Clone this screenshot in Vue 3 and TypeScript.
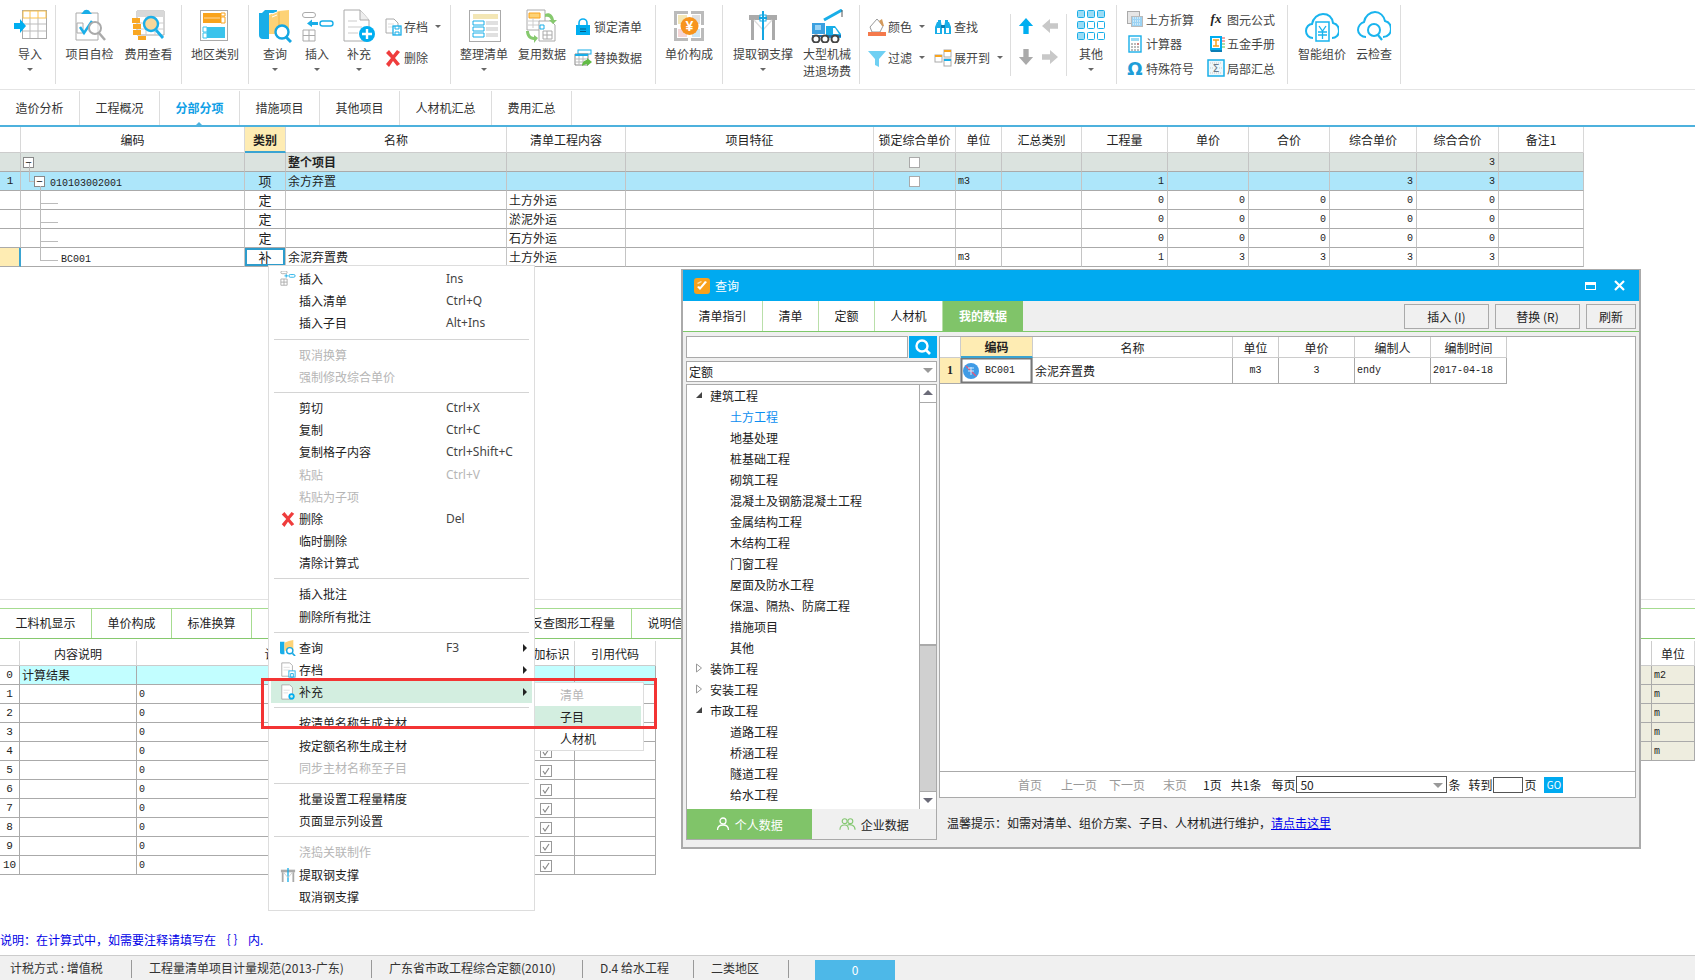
<template>
  <div class="page">
    <!-- ribbon -->
    <div class="ribbon">
      <div v-for="(g, gi) in ribbon" :key="gi" class="rb-group" :style="{ width: g.w + 'px', paddingLeft: (g.pl || 0) + 'px' }">
        <template v-for="(it, i) in g.items" :key="i">
          <div v-if="it.kind === 'big'" class="big" :style="{ width: it.w + 'px' }">
            <svg class="big-ic" viewBox="0 0 34 34" v-html="icons[it.icon]"></svg>
            <span class="big-lb">{{ it.label }}</span>
            <i v-if="it.caret" class="caret big-caret"></i>
          </div>
          <div v-else-if="it.kind === 'sep'" class="rb-sep"></div>
          <div v-else-if="it.kind === 'arrows'" class="arrows" :style="{ width: it.w + 'px' }">
            <svg v-for="a in arrowIcons" :key="a" class="arrow-ic" viewBox="0 0 18 18" v-html="icons[a]"></svg>
          </div>
          <div v-else class="col" :class="{ three: it.rows.length === 3 }" :style="{ width: it.w + 'px', paddingLeft: (it.pl || 0) + 'px' }">
            <div v-for="r in it.rows" :key="r.label" class="col-row">
              <svg class="small-ic" viewBox="0 0 18 18" v-html="icons[r.icon]"></svg>
              <span>{{ r.label }}</span>
              <i v-if="r.caret" class="caret row-caret"></i>
            </div>
          </div>
        </template>
      </div>
    </div>

    <!-- page tabs -->
    <div class="tabs">
      <div v-for="t in pageTabs" :key="t" class="tab" :class="{ active: t === '分部分项' }">{{ t }}</div>
    </div>

    <!-- main grid -->
    <div class="main">
      <table class="grid">
        <colgroup><col v-for="c in mainCols" :key="c.t + c.w" :style="{ width: c.w + 'px' }" /></colgroup>
        <thead>
          <tr>
            <th v-for="c in mainCols" :key="c.t" :class="{ picked: c.t === '类别' }">{{ c.t }}</th>
          </tr>
        </thead>
        <tbody>
          <tr v-for="(r, ri) in mainRows" :key="ri" :class="r.cls">
            <td class="num">{{ r.num }}</td>
            <td class="code">
              <span v-if="ri === 0" class="exp exp0">−</span>
              <template v-if="ri === 1">
                <span class="ln v" style="left: 8px; top: -9px; height: 18px"></span>
                <span class="ln h" style="left: 8px; top: 9px; width: 6px"></span>
                <span class="exp exp1">−</span>
                <span class="ln v" style="left: 19px; top: 14px; height: 5px"></span>
              </template>
              <template v-if="ri > 1">
                <span class="ln v" :style="{ left: '19px', top: '0', height: ri === 5 ? '13px' : '19px' }"></span>
                <span class="ln h" style="left: 19px; top: 12px; width: 18px"></span>
              </template>
              <span class="mono" :class="ri === 5 ? 'pad-l' : 'pad-m'">{{ r.code }}</span>
            </td>
            <td class="kind" :class="{ sel: ri === 5 }">{{ r.kind }}</td>
            <td :class="{ bold: ri === 0 }">{{ r.name }}</td>
            <td>{{ r.content }}</td>
            <td></td>
            <td class="center"><span v-if="ri < 2" class="box"></span></td>
            <td class="mono">{{ r.unit }}</td>
            <td></td>
            <td class="mono to-right">{{ r.qty }}</td>
            <td class="mono to-right">{{ r.price }}</td>
            <td class="mono to-right">{{ r.total }}</td>
            <td class="mono to-right">{{ r.up }}</td>
            <td class="mono to-right">{{ r.tp }}</td>
            <td></td>
          </tr>
        </tbody>
      </table>
    </div>

    <!-- bottom pane -->
    <div class="lower">
      <div class="lower-tabs">
        <div v-for="t in lowerTabs" :key="t.t" class="lower-tab" :style="{ width: t.w + 'px' }">{{ t.t }}</div>
      </div>
      <div class="lower-body">
        <table class="grid sub">
          <colgroup><col v-for="c in subCols" :key="c.t" :style="{ width: c.w + 'px' }" /></colgroup>
          <thead><tr><th v-for="c in subCols" :key="c.t">{{ c.t }}</th></tr></thead>
          <tbody>
            <tr v-for="n in 11" :key="n" :class="{ cyan: n === 1 }">
              <td class="num">{{ n - 1 }}</td>
              <td>{{ n === 1 ? '计算结果' : '' }}</td>
              <td class="mono">{{ n === 1 ? '' : '0' }}</td>
              <td></td>
              <td class="center">
                <svg v-if="n > 1" class="chk" viewBox="0 0 12 12"><rect x="0.5" y="0.5" width="11" height="11" fill="#fff" stroke="#999" /><path d="M3 6l2 3 4-6" fill="none" stroke="#888" stroke-width="1.2" /></svg>
              </td>
              <td></td>
            </tr>
          </tbody>
        </table>
        <table class="grid side">
          <colgroup><col style="width: 11px" /><col style="width: 43px" /></colgroup>
          <thead><tr><th></th><th>单位</th></tr></thead>
          <tbody>
            <tr v-for="(u, i) in sideUnits" :key="i" class="beige"><td></td><td class="mono">{{ u }}</td></tr>
          </tbody>
        </table>
      </div>
    </div>

    <div class="note">说明：在计算式中，如需要注释请填写在 ｛ ｝ 内.</div>

    <div class="status">
      <div v-for="s in statusItems" :key="s.t" class="st-item" :style="{ width: s.w + 'px' }">{{ s.t }}</div>
      <div class="st-box">0</div>
    </div>

    <!-- context menu -->
    <div class="menu">
      <template v-for="(grp, gi) in menuGroups" :key="gi">
        <div v-if="gi > 0" class="menu-sep"></div>
        <div v-for="m in grp" :key="m.t" class="menu-item" :class="{ off: m.off, hot: m.t === '补充' }">
          <svg v-if="m.icon" class="menu-ic" viewBox="0 0 18 18" v-html="icons[m.icon]"></svg>
          <span class="menu-lb">{{ m.t }}</span>
          <span class="menu-key">{{ m.key }}</span>
          <i v-if="m.more" class="more"></i>
        </div>
      </template>
    </div>
    <div class="submenu">
      <div class="sub-item off">清单</div>
      <div class="sub-item hot">子目</div>
      <div class="sub-item">人材机</div>
    </div>
    <div class="redbox"></div>

    <!-- query dialog -->
    <div class="dialog">
      <div class="dlg-title">
        <svg class="dlg-logo" viewBox="0 0 16 16">
          <rect width="16" height="16" rx="3" fill="#f9a11b" />
          <path d="M3 9l3 3 7-8-2-1-5 6-1-1z" fill="#fff" />
          <path d="M3 5l4-2 1 1-4 2z" fill="#ffe3ad" />
        </svg>
        <span>查询</span>
        <span class="dlg-max"></span>
        <svg class="dlg-close" viewBox="0 0 11 11"><path d="M1 1l9 9M10 1l-9 9" stroke="#fff" stroke-width="2.2" /></svg>
      </div>
      <div class="dlg-tabs">
        <div v-for="t in dlgTabs" :key="t.t" class="dlg-tab" :class="{ on: t.t === '我的数据' }" :style="{ width: t.w + 'px' }">{{ t.t }}</div>
        <div class="dlg-btns">
          <button class="btn wide">插入 (I)</button>
          <button class="btn wide">替换 (R)</button>
          <button class="btn narrow">刷新</button>
        </div>
      </div>
      <div class="dlg-body">
        <div class="dlg-left">
          <div class="search">
            <div class="search-in"></div>
            <div class="search-btn">
              <svg viewBox="0 0 18 18" width="18" height="18"><circle cx="8" cy="8" r="5.5" fill="none" stroke="#fff" stroke-width="2.4" /><path d="M12 12l4 4" stroke="#fff" stroke-width="2.6" /></svg>
            </div>
          </div>
          <div class="select"><span>定额</span><i class="sel-tri"></i></div>
          <div class="tree-box">
            <div class="tree-wrap">
              <div class="tree">
                <div v-for="n in treeNodes" :key="n.t" class="node" :class="{ deep: !n.top, cur: n.t === '土方工程' }">
                  <svg v-if="n.top" class="tw" viewBox="0 0 8 10">
                    <path v-if="n.open" d="M7 2v6H1z" fill="#444" />
                    <path v-else d="M1.500 1l5 4-5 4z" fill="#fff" stroke="#999" />
                  </svg>
                  {{ n.t }}
                </div>
              </div>
              <div class="scroll">
                <div class="sb-btn"><i class="sb-up"></i></div>
                <div class="sb-thumb"></div>
                <div class="sb-track"></div>
                <div class="sb-btn"><i class="sb-down"></i></div>
              </div>
            </div>
            <div class="tree-tabs">
              <div class="tree-tab on">
                <svg viewBox="0 0 14 14" width="14" height="14"><circle cx="7" cy="4" r="3" fill="none" stroke="#fff" stroke-width="1.3" /><path d="M1.5 13c0-3.5 2-5 5.500-5s5.500 1.500 5.500 5" fill="none" stroke="#fff" stroke-width="1.3" /></svg>
                个人数据
              </div>
              <div class="tree-tab">
                <svg viewBox="0 0 18 14" width="17" height="14"><circle cx="6" cy="4" r="2.600" fill="none" stroke="#85c872" stroke-width="1.200" /><circle cx="12" cy="4" r="2.600" fill="none" stroke="#85c872" stroke-width="1.200" /><path d="M1 13c0-3 2-5 5-5s4 2 4 5M9 8c3-1 8 0 8 5" fill="none" stroke="#85c872" stroke-width="1.200" /></svg>
                企业数据
              </div>
            </div>
          </div>
        </div>
        <div class="dlg-right">
          <div class="right-pane">
            <div class="res-wrap">
              <table class="res">
                <colgroup><col v-for="c in resCols" :key="c.t" :style="{ width: c.w + 'px' }" /></colgroup>
                <thead>
                  <tr><th v-for="c in resCols" :key="c.t" :class="{ picked2: c.t === '编码' }">{{ c.t }}</th></tr>
                </thead>
                <tbody>
                  <tr>
                    <td class="res-num">1</td>
                    <td class="res-code">
                      <svg viewBox="0 0 16 16" width="16" height="16"><circle cx="8" cy="8" r="8" fill="#3f9be6" /><path d="M3 3l10 10" stroke="#e9577a" stroke-width="1.200" /><path d="M5 5h6M5 8h6M8 4v8" stroke="#cfe8ff" stroke-width="1" /></svg>
                      <span class="mono">BC001</span>
                    </td>
                    <td>余泥弃置费</td>
                    <td class="center mono">m3</td>
                    <td class="center mono">3</td>
                    <td class="mono">endy</td>
                    <td class="mono">2017-04-18</td>
                  </tr>
                </tbody>
              </table>
            </div>
            <div class="pager">
              <span class="dim p-first">首页</span>
              <span class="dim p-prev">上一页</span>
              <span class="dim p-next">下一页</span>
              <span class="dim p-last">末页</span>
              <span class="p-pg">1页</span>
              <span class="p-tot">共1条</span>
              <span class="p-per">每页</span>
              <div class="p-sel"><span>50</span><i class="sel-tri"></i></div>
              <span class="p-unit">条</span>
              <span class="p-go">转到</span>
              <div class="p-in"></div>
              <span class="p-ye">页</span>
              <div class="go">GO</div>
            </div>
          </div>
          <div class="hint">温馨提示：如需对清单、组价方案、子目、人材机进行维护，<a class="link">请点击这里</a></div>
        </div>
      </div>
    </div>
  </div>
</template>

<script setup lang="ts">
type Row = { icon: string; label: string; caret?: boolean }
type Item =
  | { kind: 'big'; w: number; icon: string; label: string; caret?: boolean }
  | { kind: 'col'; w: number; pl?: number; rows: Row[] }
  | { kind: 'sep' }
  | { kind: 'arrows'; w: number }

const ribbon: { w: number; pl?: number; items: Item[] }[] = [
  { w: 56, pl: 5, items: [{ kind: 'big', w: 50, icon: 'imp', label: '导入', caret: true }] },
  {
    w: 126,
    pl: 4,
    items: [
      { kind: 'big', w: 59, icon: 'check', label: '项目自检' },
      { kind: 'big', w: 59, icon: 'fee', label: '费用查看' },
    ],
  },
  { w: 67, items: [{ kind: 'big', w: 66, icon: 'area', label: '地区类别' }] },
  {
    w: 202,
    pl: 5,
    items: [
      { kind: 'big', w: 42, icon: 'query', label: '查询', caret: true },
      { kind: 'big', w: 42, icon: 'insert', label: '插入', caret: true },
      { kind: 'big', w: 42, icon: 'add', label: '补充', caret: true },
      {
        kind: 'col',
        w: 70,
        pl: 4,
        rows: [
          { icon: 'save', label: '存档', caret: true },
          { icon: 'del', label: '删除' },
        ],
      },
    ],
  },
  {
    w: 205,
    pl: 4,
    items: [
      { kind: 'big', w: 58, icon: 'tidy', label: '整理清单', caret: true },
      { kind: 'big', w: 58, icon: 'reuse', label: '复用数据' },
      {
        kind: 'col',
        w: 84,
        pl: 3,
        rows: [
          { icon: 'lock', label: '锁定清单' },
          { icon: 'swap', label: '替换数据' },
        ],
      },
    ],
  },
  { w: 67, items: [{ kind: 'big', w: 66, icon: 'unit', label: '单价构成' }] },
  {
    w: 137,
    pl: 6,
    items: [
      { kind: 'big', w: 68, icon: 'steel', label: '提取钢支撑', caret: true },
      { kind: 'big', w: 60, icon: 'crane', label: '大型机械 进退场费' },
    ],
  },
  {
    w: 257,
    pl: 8,
    items: [
      {
        kind: 'col',
        w: 66,
        rows: [
          { icon: 'color', label: '颜色', caret: true },
          { icon: 'filter', label: '过滤', caret: true },
        ],
      },
      {
        kind: 'col',
        w: 76,
        rows: [
          { icon: 'find', label: '查找' },
          { icon: 'expand', label: '展开到', caret: true },
        ],
      },
      { kind: 'sep' },
      { kind: 'arrows', w: 54 },
      { kind: 'sep' },
      { kind: 'big', w: 46, icon: 'other', label: '其他', caret: true },
    ],
  },
  {
    w: 171,
    pl: 9,
    items: [
      {
        kind: 'col',
        w: 81,
        rows: [
          { icon: 'soil', label: '土方折算' },
          { icon: 'calc', label: '计算器' },
          { icon: 'omega', label: '特殊符号' },
        ],
      },
      {
        kind: 'col',
        w: 78,
        rows: [
          { icon: 'fx', label: '图元公式' },
          { icon: 'manual', label: '五金手册' },
          { icon: 'sum', label: '局部汇总' },
        ],
      },
    ],
  },
  {
    w: 113,
    pl: 4,
    items: [
      { kind: 'big', w: 60, icon: 'cloud1', label: '智能组价' },
      { kind: 'big', w: 44, icon: 'cloud2', label: '云检查' },
    ],
  },
]

const arrowIcons = ['up', 'left', 'down', 'right']

const icons: Record<string, string> = {
  imp: `<rect x="9.500" y="1.500" width="24" height="28" fill="#fff" stroke="#aaa"/><path d="M10 2h23v7H10z" fill="#fff" stroke="#fcc24a"/><path d="M17 2v7M25 2v7" stroke="#fcc24a"/><path d="M10 15h23M10 22h23M17 9v20M25 9v20" stroke="#bbb"/><path d="M1 14h6v-4l6 7-6 7v-4H1z" fill="#00aef0"/>`,
  check: `<path d="M3 4h22v27H3z" fill="#fff" stroke="#aaa"/><path d="M10 3c1-3 6-3 7 0l2 2H8z" fill="#19aee8"/><path d="M4 14h6v10H4z" fill="none" stroke="#aaa"/><path d="M7 18l4 6 8-12" fill="none" stroke="#19aee8" stroke-width="2.500"/><circle cx="22" cy="19" r="6" fill="#fff" fill-opacity=".5" stroke="#aaa" stroke-width="2"/><path d="M26 24l6 7" stroke="#aaa" stroke-width="2.500"/>`,
  fee: `<path d="M5 2h27v24H5z" fill="#fff" stroke="#aaa"/><path d="M5 2h27v6H5z" fill="#d8d8d8"/><path d="M5 14h27M5 20h27M14 8v18M23 8v18" stroke="#ccc"/><path d="M0 9h8v5H0zM1 15h8v5H1zM1 21h8v5H1zM6 27h8v4H6z" fill="#f9a723"/><circle cx="19" cy="15" r="7" fill="#f7d79a" stroke="#19aee8" stroke-width="2.400"/><path d="M24 21l7 8" stroke="#19aee8" stroke-width="2.800"/>`,
  area: `<rect x="2.500" y="1.500" width="27" height="30" fill="#fff" stroke="#aaa"/><path d="M5 4h18v10H5z" fill="#f9a31c"/><path d="M23 4h4v3h-4zM23 8h4v6h-4z" fill="none" stroke="#f9a31c"/><path d="M9 18h18v11H9z" fill="#3bc3ec"/><path d="M5 18h4v5H5zM5 24h4v5H5z" fill="none" stroke="#3bc3ec"/><path d="M6 9h16" stroke="#fff" stroke-opacity=".6"/>`,
  query: `<path d="M1 4h10v26H5c-3 0-4-2-4-4z" fill="#19aee8"/><path d="M4 4l3-3h12v3z" fill="#19aee8"/><path d="M11 6l10-4 10-1v24H11z" fill="#fdd276"/><path d="M21 3v22" stroke="#f0b447"/><path d="M14 5l5-2M14 8l5-2" stroke="#fff"/><circle cx="24" cy="23" r="6.500" fill="#fff" stroke="#14a6e2" stroke-width="2.400"/><path d="M28 28l5 5" stroke="#14a6e2" stroke-width="3"/>`,
  insert: `<rect x="2.500" y="3.500" width="13" height="5" rx="2.500" fill="#fff" stroke="#aaa"/><rect x="20" y="12" width="13" height="5" rx="2.500" fill="#fff" stroke="#19aee8" stroke-width="1.400"/><path d="M7 14.500l5-4v2.500h6v3h-6V18z" fill="#19aee8"/><path d="M3 21h12v11H3zM3 26.500h12M9 21v11" fill="none" stroke="#aaa"/>`,
  add: `<path d="M2 1h16l9 10v21H2z" fill="#fff" stroke="#aaa"/><path d="M18 1v10h9" fill="#eee" stroke="#aaa"/><path d="M6 12h9M6 18h14M6 24h10" stroke="#ddd" stroke-width="1.500"/><circle cx="25" cy="25" r="8" fill="#00aef0"/><path d="M25 20v10M20 25h10" stroke="#fff" stroke-width="2.400"/>`,
  save: `<path d="M2 1h8l4 4v10H2z" fill="#fff" stroke="#aaa"/><path d="M4 6h6M4 9h6" stroke="#ddd"/><rect x="9" y="8" width="8" height="9" fill="#fff" stroke="#19aee8" stroke-width="1.300"/><path d="M11 8v3h4V8M11 17v-3h4v3" fill="none" stroke="#19aee8"/>`,
  del: `<path d="M2 4l3-3 4 5 4-5 3 2-5 6 5 6-3 2-4-5-4 6-3-3 5-6z" fill="#ef3c3c"/>`,
  tidy: `<rect x="2.500" y="1.500" width="31" height="31" fill="#fff" stroke="#aaa"/><path d="M6 5h25v5H6z" fill="#f3e6b5"/><path d="M6 12h11v4H6zM6 18h11v4H6zM6 24h11v4H6z" fill="#fff" stroke="#19aee8"/><path d="M19 12h12v4H19zM19 18h12v4H19zM19 24h12v4H19z" fill="#e0e0e0"/>`,
  reuse: `<path d="M2 1h18v20H2z" fill="#fff" stroke="#aaa"/><path d="M4 4h11v5H4z" fill="#fdd276" stroke="#f9a31c"/><path d="M3 12h12M3 16h12M8 9v10" stroke="#ccc"/><path d="M14 12h12l4 4v16H14z" fill="#fff" stroke="#aaa"/><path d="M15 16h4v4h-4z" fill="none" stroke="#19aee8"/><path d="M18 22h9v8h-9zM22 22v8M18 26h9" fill="none" stroke="#aaa"/><path d="M20 5c4-2 8 0 9 6h3l-4 4-4-4h2c-1-3-3-4-6-3z" fill="#86c96e"/><path d="M1 22c0 5 3 9 8 9v3l4-5-4-3v2c-3 0-5-3-5-6z" fill="#86c96e"/>`,
  lock: `<path d="M5 8V5a4 4 0 018 0v3" fill="none" stroke="#0aaef0" stroke-width="1.600"/><rect x="2" y="7" width="14" height="10" fill="#00aef0"/><path d="M6 11h6M6 13.500h6" stroke="#055e8a"/>`,
  swap: `<rect x="4" y="1" width="13" height="4" fill="#fff" stroke="#19aee8"/><path d="M1 5h13v11H1z" fill="#fff" stroke="#888"/><path d="M1 5h13v2H1z" fill="#19aee8"/><path d="M1 10h13M1 13h13M5 7v9M9 7v9" stroke="#bbb"/><path d="M8 17c0-4 3-6 5-6V9l5 4-5 4v-2c-2 0-3 1-5 2z" fill="#62bb46"/>`,
  unit: `<rect x="2.500" y="2.500" width="30" height="30" fill="#fff" stroke="none"/><path d="M2 2h14v3H5v11H2zM32 2H19v3h10v11h3zM2 32h14v-3H5V19H2zM32 32H19v-3h10V19h3z" fill="#bbb"/><path d="M6 6h9v9H6z" fill="#f3e6b5"/><path d="M20 6h8v9h-8z" fill="#e0e0e0"/><path d="M6 20h9v8H6z" fill="#f5d5d5"/><path d="M20 20h8v8h-8z" fill="#cfe6f3"/><circle cx="17.500" cy="17" r="9" fill="#f7941d"/><text x="17.500" y="22" text-anchor="middle" font-size="14" font-weight="700" fill="#fff" font-family="Liberation Sans, sans-serif">¥</text>`,
  steel: `<path d="M3 6h28v5H3z" fill="#aaa"/><path d="M5 11h3v20H5zM26 11h3v20h-3z" fill="#aaa"/><path d="M8 11l9 10 9-10" fill="none" stroke="#ddd" stroke-width="1.300"/><rect x="14" y="6" width="6" height="6" fill="#fff" stroke="#19aee8"/><path d="M17 2v29M13 9h8" stroke="#14a6e2" stroke-width="2"/>`,
  crane: `<path d="M2 14h13v11H2z" fill="#3ba0e0"/><path d="M5 16h6v5H5z" fill="#9bd3f4"/><path d="M14 11L32 1" stroke="#19aee8" stroke-width="3"/><path d="M32 1v7" stroke="#555"/><path d="M16 17h9l6 8v4H16z" fill="#19aee8"/><path d="M23 19h2l4 6h-6z" fill="#fff"/><path d="M2 26h29v2H2z" fill="#1a6fb0"/><circle cx="6" cy="30" r="3.500" fill="#fff" stroke="#444" stroke-width="2"/><circle cx="15" cy="30" r="3.500" fill="#fff" stroke="#444" stroke-width="2"/><circle cx="25" cy="30" r="3.500" fill="#fff" stroke="#444" stroke-width="2"/>`,
  color: `<path d="M9 1l6 7-3 6H4L2 9z" fill="#fff" stroke="#999"/><path d="M11 3l3-2 2 7h-2z" fill="#d49a5c"/><rect x="0" y="14" width="18" height="4" fill="#f4794b"/>`,
  filter: `<path d="M0 2h18l-7 8v8l-4-2v-6z" fill="#6fd0f3"/>`,
  find: `<path d="M1 9l2-5h4l1 5v7H1zM17 9l-2-5h-4l-1 5v7h7z" fill="#19aee8"/><path d="M4 2h3v3H4zM11 2h3v3h-3z" fill="#19aee8"/><path d="M3 10h3v5H3zM12 10h3v5h-3z" fill="#fff"/><path d="M7 7h4v3H7z" fill="#0b7fb5"/>`,
  expand: `<rect x="1" y="6" width="7" height="7" fill="#fff" stroke="#aaa"/><path d="M1 6h7v2H1z" fill="#f9a31c"/><rect x="10" y="1" width="7" height="7" fill="#fff" stroke="#aaa"/><path d="M10 1h7v2h-7z" fill="#f9a31c"/><rect x="10" y="10" width="7" height="7" fill="#fff" stroke="#aaa"/><path d="M10 10h7v2h-7z" fill="#19aee8"/>`,
  up: `<path d="M9 0l8 9h-5v9H6V9H1z" fill="#00aef0"/>`,
  left: `<path d="M0 9l9-8v5h9v6H9v5z" fill="#c8c8c8"/>`,
  down: `<path d="M9 18L1 9h5V0h6v9h5z" fill="#aaa"/>`,
  right: `<path d="M18 9L9 1v5H0v6h9v5z" fill="#c8c8c8"/>`,
  other: `<g fill="#9bdcf5" stroke="#19aee8"><rect x="3.500" y="1.500" width="7" height="7" rx="1"/><rect x="13.500" y="1.500" width="7" height="7" rx="1"/><rect x="23.500" y="1.500" width="7" height="7" rx="1"/><rect x="3.500" y="12.500" width="7" height="7" rx="1"/><rect x="13.500" y="12.500" width="7" height="7" rx="1" fill="#fff"/><rect x="23.500" y="12.500" width="7" height="7" rx="1" fill="#fff"/><rect x="3.500" y="23.500" width="7" height="7" rx="1"/><rect x="13.500" y="23.500" width="7" height="7" rx="1" fill="#fff"/><rect x="23.500" y="23.500" width="7" height="7" rx="1" fill="#fff"/></g>`,
  soil: `<rect x="1.500" y="1.500" width="12" height="12" fill="#e6e6e6" stroke="#aaa"/><rect x="5.500" y="6.500" width="11" height="10" fill="#9bd3f4" stroke="#bbb"/><path d="M7 8h8M7 11h8M7 14h8" stroke="#fff" stroke-dasharray="1 1"/>`,
  calc: `<rect x="3" y="1" width="12" height="16" fill="#fff" stroke="#19aee8" stroke-width="1.400"/><path d="M5 3h8v3H5z" fill="#9bdcf5"/><path d="M5 9h2M8 9h2M11 9h2M5 12h2M8 12h2M11 12h2M5 15h2M8 15h2M11 15h2" stroke="#777"/><path d="M11 9h2" stroke="#e04a4a"/>`,
  omega: `<text x="9" y="16" text-anchor="middle" font-size="18" font-weight="700" fill="#1f9ed8" font-family="DejaVu Sans, sans-serif">Ω</text>`,
  fx: `<text x="9" y="13" text-anchor="middle" font-size="13" font-weight="700" font-style="italic" fill="#222" font-family="Liberation Serif, serif">fx</text>`,
  manual: `<path d="M3 1h12v14H3z" fill="#00aef0"/><path d="M3 15h12v2H4z" fill="#0a7db5"/><path d="M5 3h8v10H5z" fill="#fff"/><path d="M6 5h6M9 5v6M6 11h6" stroke="#f9a31c" stroke-width="1.500"/><path d="M15 3h3M15 6h3" stroke="#e04a4a"/><path d="M15 9h3M15 12h3" stroke="#62bb46"/>`,
  sum: `<rect x="1" y="1" width="16" height="16" fill="#eef8fc" stroke="#19aee8" stroke-width="1.500"/><path d="M3 4h12M3 14h12M3 9h3M12 9h3" stroke="#c8c8c8" stroke-dasharray="1 1"/><text x="9" y="13" text-anchor="middle" font-size="11" fill="#6b7a8a" font-family="DejaVu Sans, sans-serif">Σ</text>`,
  cloud1: `<path d="M8 29c-4 0-7-3-7-7 0-4 3-7 6-7 1-6 6-10 11-10 5 0 9 3 10 9 4 1 6 4 6 8 0 4-3 7-7 7" fill="none" stroke="#19b4ee" stroke-width="2"/><path d="M11 13h13v19H11z" fill="#fff" stroke="#19b4ee" stroke-width="1.500"/><path d="M14 17l3.500 5 3.500-5M13 23h9M13 26h9M17.500 22v8" fill="none" stroke="#19b4ee" stroke-width="1.300"/>`,
  cloud2: `<path d="M9 28c-4 0-8-3-8-7 0-4 3-7 6-8 1-6 6-10 11-10s9 4 10 9c4 1 6 4 6 8 0 4-3 8-8 8" fill="none" stroke="#19b4ee" stroke-width="2"/><circle cx="17" cy="21" r="6" fill="#fff" stroke="#19b4ee" stroke-width="2"/><path d="M21 26l4 5" stroke="#19b4ee" stroke-width="2.200"/>`,
  mInsert: `<rect x="1" y="0" width="7" height="3" rx="1.500" fill="#fff" stroke="#aaa"/><rect x="10" y="4" width="7" height="3" rx="1.500" fill="#fff" stroke="#19aee8"/><path d="M5 5.500h4M7 3.500v4" stroke="#19aee8"/><path d="M1 9h7v7H1zM1 12.500h7M4.500 9v7" fill="none" stroke="#aaa"/>`,
  mQuery: `<path d="M0 2h5v14H2c-1 0-2-1-2-2z" fill="#19aee8"/><path d="M5 3l5-2 5-1v12H5z" fill="#fdd276"/><circle cx="11" cy="12" r="3.500" fill="#fff" stroke="#14a6e2" stroke-width="1.500"/><path d="M14 15l3 3" stroke="#14a6e2" stroke-width="1.800"/>`,
  mSave: `<path d="M2 1h9l3 3v12H2z" fill="#fff" stroke="#aaa"/><path d="M4 6h7M4 9h7" stroke="#ddd"/><rect x="10" y="10" width="7" height="7" fill="#fff" stroke="#19aee8"/><path d="M12 13h3v4h-3z" fill="none" stroke="#19aee8"/>`,
  mAdd: `<path d="M2 1h9l3 3v13H2z" fill="#fff" stroke="#aaa"/><path d="M4 7h7M4 10h5" stroke="#ddd"/><circle cx="13" cy="14" r="3.500" fill="#00aef0"/><circle cx="13" cy="14" r="1.500" fill="#d3eee0"/>`,
  mSteel: `<path d="M1 3h16v3H1z" fill="#aaa"/><path d="M2 6h2v11H2zM14 6h2v11h-2z" fill="#aaa"/><path d="M9 1v16" stroke="#19aee8" stroke-width="1.500"/><path d="M4 6l5 6 5-6" fill="none" stroke="#ccc"/>`,
}

const pageTabs = ['造价分析', '工程概况', '分部分项', '措施项目', '其他项目', '人材机汇总', '费用汇总']

const mainCols = [
  { t: '', w: 21 },
  { t: '编码', w: 224 },
  { t: '类别', w: 41 },
  { t: '名称', w: 221 },
  { t: '清单工程内容', w: 119 },
  { t: '项目特征', w: 248 },
  { t: '锁定综合单价', w: 82 },
  { t: '单位', w: 46 },
  { t: '汇总类别', w: 80 },
  { t: '工程量', w: 86 },
  { t: '单价', w: 81 },
  { t: '合价', w: 81 },
  { t: '综合单价', w: 87 },
  { t: '综合合价', w: 82 },
  { t: '备注1', w: 85 },
]

const mainRows = [
  { cls: 'gray', num: '', code: '', kind: '', name: '整个项目', content: '', unit: '', qty: '', price: '', total: '', up: '', tp: '3' },
  { cls: 'blue', num: '1', code: '010103002001', kind: '项', name: '余方弃置', content: '', unit: 'm3', qty: '1', price: '', total: '', up: '3', tp: '3' },
  { cls: '', num: '', code: '', kind: '定', name: '', content: '土方外运', unit: '', qty: '0', price: '0', total: '0', up: '0', tp: '0' },
  { cls: '', num: '', code: '', kind: '定', name: '', content: '淤泥外运', unit: '', qty: '0', price: '0', total: '0', up: '0', tp: '0' },
  { cls: '', num: '', code: '', kind: '定', name: '', content: '石方外运', unit: '', qty: '0', price: '0', total: '0', up: '0', tp: '0' },
  { cls: 'cur', num: '', code: 'BC001', kind: '补', name: '余泥弃置费', content: '土方外运', unit: 'm3', qty: '1', price: '3', total: '3', up: '3', tp: '3' },
]

const lowerTabs = [
  { t: '工料机显示', w: 92 },
  { t: '单价构成', w: 80 },
  { t: '标准换算', w: 80 },
  { t: '换算信息', w: 90 },
  { t: '特征及内容', w: 90 },
  { t: '工程量明细', w: 89 },
  { t: '反查图形工程量', w: 111 },
  { t: '说明信息', w: 80 },
]

const subCols = [
  { t: '', w: 20 },
  { t: '内容说明', w: 117 },
  { t: '计算式', w: 292 },
  { t: '单位', w: 88 },
  { t: '附加标识', w: 58 },
  { t: '引用代码', w: 81 },
]

const sideUnits = ['m2', 'm', 'm', 'm', 'm']

const statusItems = [
  { t: '计税方式 : 增值税', w: 132 },
  { t: '工程量清单项目计量规范(2013-广东)', w: 240 },
  { t: '广东省市政工程综合定额(2010)', w: 211 },
  { t: 'D.4 给水工程', w: 111 },
  { t: '二类地区', w: 95 },
]

const menuGroups = [
  [
    { t: '插入', key: 'Ins', icon: 'mInsert' },
    { t: '插入清单', key: 'Ctrl+Q' },
    { t: '插入子目', key: 'Alt+Ins' },
  ],
  [
    { t: '取消换算', off: true },
    { t: '强制修改综合单价', off: true },
  ],
  [
    { t: '剪切', key: 'Ctrl+X' },
    { t: '复制', key: 'Ctrl+C' },
    { t: '复制格子内容', key: 'Ctrl+Shift+C' },
    { t: '粘贴', key: 'Ctrl+V', off: true },
    { t: '粘贴为子项', off: true },
    { t: '删除', key: 'Del', icon: 'del' },
    { t: '临时删除' },
    { t: '清除计算式' },
  ],
  [{ t: '插入批注' }, { t: '删除所有批注' }],
  [
    { t: '查询', key: 'F3', icon: 'mQuery', more: true },
    { t: '存档', icon: 'mSave', more: true },
    { t: '补充', icon: 'mAdd', more: true },
  ],
  [{ t: '按清单名称生成主材' }, { t: '按定额名称生成主材' }, { t: '同步主材名称至子目', off: true }],
  [{ t: '批量设置工程量精度' }, { t: '页面显示列设置' }],
  [{ t: '浇捣关联制作', off: true }, { t: '提取钢支撑', icon: 'mSteel' }, { t: '取消钢支撑' }],
]

const dlgTabs = [
  { t: '清单指引', w: 80 },
  { t: '清单', w: 56 },
  { t: '定额', w: 56 },
  { t: '人材机', w: 68 },
  { t: '我的数据', w: 80 },
]

const treeNodes = [
  { t: '建筑工程', top: true, open: true },
  { t: '土方工程' },
  { t: '地基处理' },
  { t: '桩基础工程' },
  { t: '砌筑工程' },
  { t: '混凝土及钢筋混凝土工程' },
  { t: '金属结构工程' },
  { t: '木结构工程' },
  { t: '门窗工程' },
  { t: '屋面及防水工程' },
  { t: '保温、隔热、防腐工程' },
  { t: '措施项目' },
  { t: '其他' },
  { t: '装饰工程', top: true },
  { t: '安装工程', top: true },
  { t: '市政工程', top: true, open: true },
  { t: '道路工程' },
  { t: '桥涵工程' },
  { t: '隧道工程' },
  { t: '给水工程' },
]

const resCols = [
  { t: '', w: 21 },
  { t: '编码', w: 72 },
  { t: '名称', w: 200 },
  { t: '单位', w: 46 },
  { t: '单价', w: 76 },
  { t: '编制人', w: 76 },
  { t: '编制时间', w: 76 },
]
</script>

<style scoped>
.page {
  position: relative;
  width: 1695px;
  height: 980px;
  overflow: hidden;
  background: #fff;
  font-family: 'Noto Sans CJK SC', 'Noto Sans', sans-serif;
  font-size: 12px;
  color: #222;
}

/* ribbon */
.ribbon {
  display: flex;
  height: 90px;
  box-sizing: border-box;
  border-bottom: 1px solid #e4e4e4;
  padding-top: 5px;
}
.rb-group {
  display: flex;
  box-sizing: border-box;
  height: 79px;
  border-right: 1px solid #ddd;
  justify-content: flex-start;
  color: #444;
}
.big {
  display: flex;
  flex-direction: column;
  align-items: center;
  flex: none;
  padding-top: 4px;
  text-align: center;
}
.big-ic {
  width: 34px;
  height: 34px;
  flex: none;
}
.big-lb {
  margin-top: 2px;
  line-height: 17px;
  word-spacing: 20px;
}
.caret {
  display: inline-block;
  width: 0;
  height: 0;
  border-left: 3px solid transparent;
  border-right: 3px solid transparent;
  border-top: 3px solid #666;
}
.big-caret {
  margin-top: 6px;
}
.col {
  flex: none;
  box-sizing: border-box;
  padding-top: 6px;
}
.col.three {
  padding-top: 2px;
}
.col-row {
  display: flex;
  align-items: center;
  height: 31px;
  white-space: nowrap;
}
.three .col-row {
  height: 24.6px;
}
.small-ic {
  width: 18px;
  height: 18px;
  margin-right: 2px;
  flex: none;
}
.row-caret {
  margin-left: 7px;
}
.rb-sep {
  width: 1px;
  height: 62px;
  margin: 9px 1px 0 0;
  background: #ddd;
  flex: none;
}
.arrows {
  display: grid;
  grid-template-columns: 18px 18px;
  grid-auto-rows: 31px;
  column-gap: 6px;
  padding: 13px 0 0 6px;
  box-sizing: border-box;
  flex: none;
}
.arrow-ic {
  width: 16px;
  height: 16px;
}

/* page tabs */
.tabs {
  display: flex;
  height: 37px;
  box-sizing: border-box;
  border-bottom: 2px solid #4db1dd;
}
.tab {
  position: relative;
  width: 79px;
  border-right: 1px solid #ddd;
  text-align: center;
  line-height: 34px;
  margin-top: 1px;
  color: #333;
}
.tab:nth-child(6) {
  width: 91px;
}
.tab.active {
  color: #11a0e6;
  font-weight: 700;
}
.tab.active::after {
  content: '';
  position: absolute;
  left: 35px;
  bottom: -1px;
  border-left: 4px solid transparent;
  border-right: 4px solid transparent;
  border-bottom: 4px solid #4db1dd;
}

/* grids */
.main {
  height: 472px;
}
.grid {
  table-layout: fixed;
  border-collapse: separate;
  border-spacing: 0;
  width: 1584px;
}
.grid th {
  height: 25px;
  padding: 0;
  box-sizing: border-box;
  font-weight: 400;
  border-right: 1px solid #d8d8d8;
  border-bottom: 1px solid #ccc;
  white-space: nowrap;
  overflow: hidden;
}
.main .grid th {
  height: 26px;
}
.grid th.picked {
  background: #feecb3;
  font-weight: 700;
  border-bottom: 2px solid #3aa4d2;
}
.grid td {
  position: relative;
  height: 19px;
  padding: 0 2px;
  box-sizing: border-box;
  border-right: 1px solid #c4c4c4;
  border-bottom: 1px solid #aaa;
  line-height: 14px;
  white-space: nowrap;
  overflow: hidden;
}
.grid td.code {
  overflow: visible;
}
.code .mono {
  position: relative;
  top: 1px;
}
.grid td.mono {
  padding-top: 2px;
}
.gray td {
  background: #dbe3df;
}
.blue td {
  background: #ade6fa;
}
.cur .num {
  background: #feecb3;
  border-right: 2px solid #3aa4d2;
}
.num {
  text-align: center;
  font-family: 'Liberation Mono', monospace;
  font-size: 11px;
}
.grid td.kind {
  text-align: center;
  font-size: 13px;
}
.grid td.sel {
  box-shadow: inset 0 0 0 2px #2d9ccc;
}
.bold {
  font-weight: 700;
}
.mono {
  font-family: 'Liberation Mono', monospace;
  font-size: 10px;
}
.to-right {
  text-align: right;
}
.center {
  text-align: center;
}
.grid td.to-right {
  padding-right: 3px;
}
.pad-m {
  margin-left: 27px;
}
.pad-l {
  margin-left: 38px;
}
.exp {
  position: absolute;
  top: 4px;
  width: 11px;
  height: 11px;
  box-sizing: border-box;
  border: 1px solid #888;
  background: #fff;
  line-height: 8px;
  text-align: center;
  font-size: 11px;
  font-family: 'Liberation Sans', sans-serif;
}
.exp0 {
  left: 2px;
}
.exp1 {
  left: 13px;
}
.ln {
  position: absolute;
  background: #bbb;
}
.ln.v {
  width: 1px;
}
.ln.h {
  height: 1px;
}
.box {
  display: inline-block;
  width: 11px;
  height: 11px;
  box-sizing: border-box;
  background: #fff;
  border: 1px solid #aaa;
  vertical-align: middle;
  margin-bottom: 2px;
}

/* lower */
.lower {
  height: 275px;
  box-sizing: border-box;
  border-top: 1px solid #e2e2e2;
  padding-top: 8px;
}
.lower-tabs {
  display: flex;
  height: 31px;
  box-sizing: border-box;
  border-top: 1px solid #a6dc90;
  border-bottom: 1px solid #86c96e;
  margin-bottom: 2px;
}
.lower-tab {
  box-sizing: border-box;
  border-right: 1px solid #a6dc90;
  text-align: center;
  line-height: 28px;
  white-space: nowrap;
}
.lower-tab:nth-child(7) {
  padding-right: 6px;
}
.lower-body {
  display: flex;
  justify-content: space-between;
  align-items: flex-start;
}
.grid.sub {
  width: 656px;
}
.grid.side {
  width: 54px;
  flex: none;
}
.sub td,
.side td {
  border-right-color: #aaa;
}
.side th:first-child {
  border-right: 1px solid #ccc;
}
.cyan td {
  background: #c2feff;
}
.grid tr.cyan td.num {
  background: #fff;
}
.beige td {
  background: #eeeddf;
}
.chk {
  width: 12px;
  height: 12px;
  display: block;
  margin: 1px auto 0;
}
.note {
  margin-top: 56px;
  height: 20px;
  line-height: 20px;
  color: #0000e6;
  white-space: nowrap;
}
.status {
  display: flex;
  position: absolute;
  left: 0;
  right: 0;
  bottom: 0;
  height: 25px;
  background: #f0f0f0;
  border-top: 1px solid #ccc;
  box-sizing: border-box;
  line-height: 24px;
  color: #333;
}
.st-item {
  box-sizing: border-box;
  padding-left: 17px;
  white-space: nowrap;
  position: relative;
}
.st-item:first-child {
  padding-left: 10px;
}
.st-item::after {
  content: '';
  position: absolute;
  right: 0;
  top: 4px;
  bottom: 2px;
  width: 1px;
  background: #999;
}
.st-box {
  width: 80px;
  margin-left: 26px;
  margin-top: 4px;
  background: #4db8e8;
  color: #fff;
  text-align: center;
  line-height: 20px;
}

/* context menu */
.menu {
  position: absolute;
  left: 268px;
  top: 265px;
  width: 267px;
  height: 646px;
  box-sizing: border-box;
  background: #fff;
  border: 1px solid #ddd;
  padding: 2px 2px;
  z-index: 5;
}
.menu-item {
  position: relative;
  height: 22.2px;
  line-height: 22px;
  display: flex;
  padding-left: 28px;
  white-space: nowrap;
}
.menu-ic {
  position: absolute;
  left: 9px;
  top: 3px;
  width: 16px;
  height: 16px;
}
.menu-lb {
  width: 147px;
  flex: none;
}
.menu-key {
  font-family: 'Noto Sans', sans-serif;
  color: #444;
}
.menu-item.off,
.menu-item.off .menu-key {
  color: #b6b6b6;
}
.menu-item.hot {
  background: #d3eee0;
}
.more {
  position: absolute;
  right: 5px;
  top: 7px;
  border-left: 4px solid #222;
  border-top: 4px solid transparent;
  border-bottom: 4px solid transparent;
}
.menu-sep {
  height: 1px;
  margin: 4px 3px;
  background: #d4d4d4;
}
.submenu {
  position: absolute;
  left: 534px;
  top: 682px;
  width: 110px;
  height: 69px;
  box-sizing: border-box;
  background: #fff;
  border: 1px solid #ddd;
  padding: 1px 2px 0 0;
  z-index: 6;
}
.sub-item {
  height: 22px;
  line-height: 22px;
  padding-left: 25px;
}
.sub-item.off {
  color: #b6b6b6;
}
.sub-item.hot {
  background: #d3eee0;
}
.redbox {
  position: absolute;
  left: 261px;
  top: 678px;
  width: 396px;
  height: 51px;
  box-sizing: border-box;
  border: 3px solid #f33434;
  z-index: 7;
  pointer-events: none;
}

/* dialog */
.dialog {
  position: absolute;
  left: 681px;
  top: 269px;
  width: 960px;
  height: 580px;
  box-sizing: border-box;
  background: #efefef;
  border: 2px solid #aaa;
  border-top-width: 1px;
  display: flex;
  flex-direction: column;
  z-index: 8;
}
.dlg-title {
  display: flex;
  align-items: center;
  height: 31px;
  flex: none;
  background: #00aaf0;
  color: #fff;
  font-size: 12px;
  padding-left: 11px;
}
.dlg-logo {
  width: 16px;
  height: 16px;
  margin-right: 5px;
}
.dlg-max {
  width: 11px;
  height: 8px;
  box-sizing: border-box;
  border: 1.500px solid #fff;
  border-top-width: 3px;
  margin-left: auto;
}
.dlg-close {
  width: 11px;
  height: 11px;
  margin: 0 14px 0 18px;
}
.dlg-tabs {
  display: flex;
  height: 31px;
  flex: none;
  box-sizing: border-box;
  border-bottom: 1px solid #7ec86a;
}
.dlg-tab {
  box-sizing: border-box;
  background: #fff;
  border-right: 1px solid #b9dfa9;
  text-align: center;
  line-height: 30px;
}
.dlg-tab.on {
  background: #80c469;
  color: #fff;
  font-weight: 700;
  border-right: 0;
}
.dlg-btns {
  display: flex;
  gap: 6px;
  margin: 3px 3px 0 auto;
}
.btn {
  height: 25px;
  padding: 0;
  background: #f0f0f0;
  border: 1px solid #aaa;
  font: inherit;
  color: #222;
}
.btn.wide {
  width: 85px;
}
.btn.narrow {
  width: 50px;
}
.dlg-body {
  flex: 1;
  display: flex;
  min-height: 0;
  padding: 4px 3px 7px;
  gap: 2px;
}
.dlg-left {
  width: 251px;
  flex: none;
  display: flex;
  flex-direction: column;
}
.search {
  display: flex;
  height: 22px;
  flex: none;
}
.search-in {
  width: 222px;
  box-sizing: border-box;
  background: #fff;
  border: 1px solid #aaa;
}
.search-btn {
  flex: 1;
  margin-left: 1px;
  background: #00aaf0;
  display: flex;
  align-items: center;
  justify-content: center;
}
.select {
  position: relative;
  height: 21px;
  flex: none;
  margin: 3px 0 2px;
  box-sizing: border-box;
  background: #fff;
  border: 1px solid #aaa;
  line-height: 19px;
  padding-left: 2px;
}
.sel-tri {
  position: absolute;
  right: 3px;
  top: 6px;
  border-left: 5px solid transparent;
  border-right: 5px solid transparent;
  border-top: 5px solid #999;
}
.tree-box {
  flex: 1;
  min-height: 0;
  box-sizing: border-box;
  border: 1px solid #aaa;
  display: flex;
  flex-direction: column;
  background: #fff;
}
.tree-wrap {
  flex: 1;
  display: flex;
  min-height: 0;
}
.tree {
  flex: 1;
  overflow: hidden;
}
.node {
  position: relative;
  height: 21px;
  line-height: 21px;
  padding-left: 23px;
  white-space: nowrap;
}
.node.deep {
  padding-left: 43px;
}
.node.cur {
  color: #0d8df0;
}
.tw {
  position: absolute;
  left: 8px;
  top: 5px;
  width: 8px;
  height: 10px;
}
.scroll {
  width: 17px;
  flex: none;
  display: flex;
  flex-direction: column;
  box-sizing: border-box;
  border-left: 1px solid #aaa;
}
.sb-btn {
  height: 17px;
  flex: none;
  background: #fff;
  border-bottom: 1px solid #aaa;
  position: relative;
}
.sb-btn:last-child {
  border-top: 1px solid #aaa;
  border-bottom: 0;
}
.sb-up {
  position: absolute;
  left: 3px;
  top: 5px;
  border-left: 5px solid transparent;
  border-right: 5px solid transparent;
  border-bottom: 5px solid #6b6b78;
}
.sb-down {
  position: absolute;
  left: 3px;
  top: 6px;
  border-left: 5px solid transparent;
  border-right: 5px solid transparent;
  border-top: 5px solid #6b6b78;
}
.sb-thumb {
  height: 243px;
  flex: none;
  box-sizing: border-box;
  background: #fff;
  border-bottom: 2px solid #aaa;
}
.sb-track {
  flex: 1;
  background: #d0d0d0;
}
.tree-tabs {
  display: flex;
  height: 30px;
  flex: none;
}
.tree-tab {
  flex: 1;
  display: flex;
  align-items: center;
  justify-content: center;
  gap: 5px;
  background: #f0f0f0;
}
.tree-tab.on {
  background: #80c469;
  color: #fff;
}
.dlg-right {
  flex: 1;
  min-width: 0;
  display: flex;
  flex-direction: column;
}
.right-pane {
  height: 462px;
  flex: none;
  box-sizing: border-box;
  background: #fff;
  border: 1px solid #aaa;
  display: flex;
  flex-direction: column;
}
.res-wrap {
  flex: 1;
}
.res {
  table-layout: fixed;
  border-collapse: separate;
  border-spacing: 0;
  width: 567px;
}
.res th {
  height: 21px;
  padding: 0;
  box-sizing: border-box;
  font-weight: 400;
  border-right: 1px solid #ccc;
  border-bottom: 1px solid #ccc;
}
.res th.picked2 {
  background: #feecb3;
  font-weight: 700;
  border-bottom: 2px solid #3aa4d2;
}
.res td {
  height: 26px;
  padding: 0 2px;
  box-sizing: border-box;
  border-right: 1px solid #aaa;
  border-bottom: 1px solid #aaa;
  white-space: nowrap;
  overflow: hidden;
}
.res td.res-num {
  background: #feecb3;
  font-weight: 700;
  text-align: center;
  font-family: 'Liberation Serif', serif;
}
.res td.res-code {
  display: flex;
  align-items: center;
  gap: 6px;
  box-shadow: inset 0 0 0 1.500px #777;
}
.pager {
  display: flex;
  align-items: center;
  height: 26px;
  flex: none;
  box-sizing: border-box;
  border-top: 1px solid #aaa;
  white-space: nowrap;
}
.dim {
  color: #999;
}
.p-first {
  margin-left: 78px;
}
.p-prev {
  margin-left: 19px;
}
.p-next {
  margin-left: 12px;
}
.p-last {
  margin-left: 18px;
}
.p-pg {
  margin-left: 16px;
}
.p-tot {
  margin-left: 9px;
}
.p-per {
  margin-left: 10px;
}
.p-sel {
  position: relative;
  width: 151px;
  height: 17px;
  margin-left: 1px;
  box-sizing: border-box;
  border: 1px solid #555;
  line-height: 15px;
  padding-left: 3px;
}
.p-unit {
  margin-left: 1px;
}
.p-go {
  margin-left: 8px;
}
.p-in {
  width: 30px;
  height: 16px;
  box-sizing: border-box;
  border: 1px solid #555;
  margin-left: 1px;
}
.p-ye {
  margin-left: 1px;
}
.go {
  width: 19px;
  height: 16px;
  margin-left: 8px;
  background: #00aaf0;
  color: #fff;
  font-size: 10px;
  line-height: 16px;
  text-align: center;
}
.hint {
  margin-top: 15px;
  padding-left: 8px;
  line-height: 20px;
  white-space: nowrap;
}
.link {
  color: #0000ee;
  text-decoration: underline;
}
</style>

<style>
html,
body {
  margin: 0;
  background: #fff;
}
</style>
